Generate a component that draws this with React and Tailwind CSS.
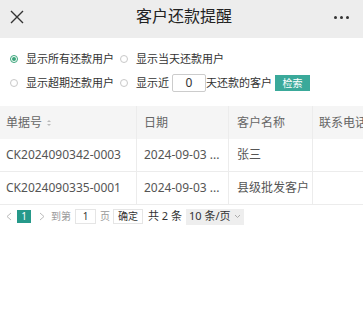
import React from 'react';

const font = { fontFamily: '"Noto Sans", "Noto Sans CJK SC", sans-serif' };

const Radio = ({ checked, label }) => (
    <label className="flex items-center">
        <span className={`w-[8px] h-[8px] rounded-full border flex items-center justify-center bg-white ${checked ? 'border-[#3aa57a]' : 'border-[#c8c8c8]'}`}>
            {checked && <span className="w-[4px] h-[4px] rounded-full bg-[#3aa57a]" />}
        </span>
        <span className="ml-[8px] text-[11px] text-[#333]">{label}</span>
    </label>
);

const rows = [
    { no: 'CK2024090342-0003', date: '2024-09-03 ...', name: '张三' },
    { no: 'CK2024090335-0001', date: '2024-09-03 ...', name: '县级批发客户' },
];

const App = () => {
    return (
        <div className="w-[363px] h-[310px] bg-white overflow-hidden" style={font}>
            {/* Title bar */}
            <div className="h-[38px] bg-[#ededed] flex items-center justify-between px-[10px]">
                <svg width="14" height="14" viewBox="0 0 14 14" className="mt-[-4px]">
                    <path d="M1 1 L13 13 M13 1 L1 13" stroke="#333" strokeWidth="1.4" fill="none" />
                </svg>
                <span className="text-[16px] text-[#222] mt-[-6px] ml-[10px]">客户还款提醒</span>
                <span className="flex gap-[3px] mr-[4px] mt-[-4px]">
                    <span className="w-[3px] h-[3px] rounded-full bg-[#333]" />
                    <span className="w-[3px] h-[3px] rounded-full bg-[#333]" />
                    <span className="w-[3px] h-[3px] rounded-full bg-[#333]" />
                </span>
            </div>

            {/* Filters */}
            <div className="pl-[10px] pt-[13px]">
                <div className="flex items-center h-[16px] gap-[6px]">
                    <Radio checked label="显示所有还款用户" />
                    <Radio label="显示当天还款用户" />
                </div>
                <div className="flex items-center h-[18px] mt-[7px]">
                    <Radio label="显示超期还款用户" />
                    <span className="ml-[6px]"><Radio label="显示近" /></span>
                    <span className="ml-[3px] w-[34px] h-[18px] border border-[#ccc] rounded-[2px] flex items-center justify-center text-[12px] text-[#333]">0</span>
                    <span className="text-[11px] text-[#333]">天还款的客户</span>
                    <button className="ml-[3px] h-[16px] w-[35px] bg-[#3aa99a] text-white text-[10px] flex items-center justify-center">检索</button>
                </div>
            </div>

            {/* Table */}
            <div className="mt-[14px]">
                <div className="flex h-[33px] bg-[#f5f5f5] text-[12px] text-[#666]">
                    <div className="w-[137px] pl-[6px] flex items-center border-r border-[#ececec]">
                        单据号
                        <svg width="6" height="8" viewBox="0 0 6 8" className="ml-[4px]">
                            <path d="M1 3 L3 1 L5 3 Z M1 5 L3 7 L5 5 Z" fill="#bbb" />
                        </svg>
                    </div>
                    <div className="w-[92px] pl-[7px] flex items-center border-r border-[#ececec]">日期</div>
                    <div className="w-[84px] pl-[8px] flex items-center border-r border-[#ececec]">客户名称</div>
                    <div className="flex-1 pl-[6px] flex items-center whitespace-nowrap overflow-hidden">联系电话</div>
                </div>
                {rows.map((r) => (
                    <div key={r.no} className="flex h-[33px] text-[12px] text-[#555] border-b border-[#ececec]">
                        <div className="w-[137px] pl-[6px] flex items-center border-r border-[#ececec]">{r.no}</div>
                        <div className="w-[92px] pl-[7px] flex items-center border-r border-[#ececec] whitespace-nowrap">{r.date}</div>
                        <div className="w-[84px] pl-[8px] flex items-center border-r border-[#ececec]">{r.name}</div>
                        <div className="flex-1" />
                    </div>
                ))}
            </div>

            {/* Pagination */}
            <div className="flex items-center h-[19px] mt-[2px] pl-[6px] text-[10px] text-[#999]">
                <svg width="6" height="9" viewBox="0 0 6 9"><path d="M5 1 L1 4.5 L5 8" stroke="#bbb" fill="none" /></svg>
                <span className="ml-[5px] w-[14px] h-[13px] bg-[#26998a] text-white text-[10px] flex items-center justify-center">1</span>
                <svg width="6" height="9" viewBox="0 0 6 9" className="ml-[8px]"><path d="M1 1 L5 4.5 L1 8" stroke="#bbb" fill="none" /></svg>
                <span className="ml-[6px]">到第</span>
                <span className="ml-[4px] w-[21px] h-[15px] border border-[#e5e5e5] flex items-center justify-center text-[#333]">1</span>
                <span className="ml-[4px]">页</span>
                <span className="ml-[3px] px-[4px] h-[15px] border border-[#e5e5e5] flex items-center text-[#333]">确定</span>
                <span className="ml-[5px] text-[#333] text-[11px]">共 2 条</span>
                <span className="ml-[4px] h-[16px] px-[3px] bg-[#eeeeee] flex items-center text-[#333] text-[11px]">
                    10 条/页
                    <svg width="7" height="5" viewBox="0 0 7 5" className="ml-[3px]"><path d="M1 1 L3.5 3.5 L6 1" stroke="#aaa" fill="none" /></svg>
                </span>
            </div>
        </div>
    );
};

export default App;
